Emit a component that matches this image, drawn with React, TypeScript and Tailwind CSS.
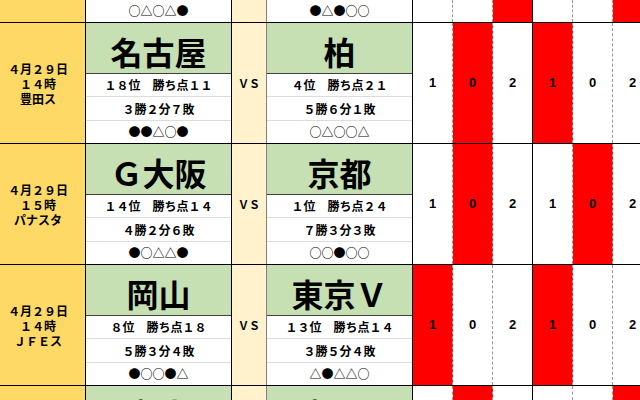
interface Side {
  name: string;
  rank: string;
  record: string;
  form: string;
}

interface Match {
  date: string[];
  home: Side;
  away: Side;
  reds: boolean[];
}

// Row cut off at the top edge: only its last line is on screen
const topTail = {
  homeForm: '○△○△●',
  awayForm: '●△●○○',
  reds: [false, false, true, false, false, true],
};

const matches: Match[] = [
  {
    date: ['４月２９日', '１４時', '豊田ス'],
    home: { name: '名古屋', rank: '１８位　勝ち点１１', record: '３勝２分７敗', form: '●●△○●' },
    away: { name: '柏', rank: '４位　勝ち点２１', record: '５勝６分１敗', form: '○△○○△' },
    reds: [false, true, false, true, false, false],
  },
  {
    date: ['４月２９日', '１５時', 'パナスタ'],
    home: { name: 'Ｇ大阪', rank: '１４位　勝ち点１４', record: '４勝２分６敗', form: '●○△△●' },
    away: { name: '京都', rank: '１位　勝ち点２４', record: '７勝３分３敗', form: '○○●○○' },
    reds: [false, true, false, false, true, false],
  },
  {
    date: ['４月２９日', '１４時', 'ＪＦＥス'],
    home: { name: '岡山', rank: '８位　勝ち点１８', record: '５勝３分４敗', form: '●○○●△' },
    away: { name: '東京Ｖ', rank: '１３位　勝ち点１４', record: '３勝５分４敗', form: '△●△△○' },
    reds: [true, false, false, true, false, false],
  },
];

// Row cut off at the bottom edge: only the top of the team names shows
const bottomHead = {
  home: '湘南',
  away: '福岡',
  reds: [false, true, false, false, false, true],
};

const scores = ['1', '0', '2', '1', '0', '2'];

function scoreCellClass(red: boolean, i: number) {
  return `w-[40px] shrink-0 flex items-center justify-center ${red ? 'bg-[#FF0000]' : 'bg-white'} ${
    i === 2 ? 'border-r border-black' : 'border-r border-dashed border-[#9a9a9a]'
  }`;
}

function TeamColumn({ side }: { side: Side }) {
  return (
    <div className="w-[146px] shrink-0 flex flex-col border-r border-black">
      {/* Team name */}
      <div className="h-[51px] bg-[#C6E0B4] border-b border-[#404040] flex items-center justify-center pt-[5px] text-[32px] leading-none font-bold">
        {side.name}
      </div>
      <div className="h-[23px] border-b border-[#dcdcdc] flex items-center justify-center">{side.rank}</div>
      <div className="h-[24px] border-b border-[#dcdcdc] flex items-center justify-center">{side.record}</div>
      <div className="h-[22px] flex items-center justify-center">{side.form}</div>
    </div>
  );
}

function MatchBlock({ match }: { match: Match }) {
  return (
    <div className="flex h-[121px] shrink-0 border-t border-black">
      <div className="w-[86px] shrink-0 bg-[#FFD966] border-r border-black pr-[9px] flex flex-col items-center justify-center">
        {match.date.map((line, i) => (
          <span key={i} className="leading-[15px]">
            {line}
          </span>
        ))}
      </div>

      <TeamColumn side={match.home} />

      <div className="w-[35px] shrink-0 bg-[#FFF2CC] border-r border-[#808080] flex items-center justify-center text-[11px]">
        ＶＳ
      </div>

      <TeamColumn side={match.away} />

      {/* Score columns */}
      {scores.map((score, i) => (
        <div key={i} className={scoreCellClass(match.reds[i], i)}>
          <span className="font-['Liberation_Sans',sans-serif] font-bold text-[13px]">{score}</span>
        </div>
      ))}
    </div>
  );
}

export default function App() {
  return (
    <div className="w-[640px] h-[400px] overflow-hidden bg-white text-black text-[12px] font-bold font-['Noto_Sans_CJK_JP',sans-serif]">
      <div className="flex flex-col w-[660px]">
        {/* partial row at the top */}
        <div className="flex h-[22px] shrink-0">
          <div className="w-[86px] shrink-0 bg-[#FFD966] border-r border-black" />
          <div className="w-[146px] shrink-0 border-r border-black flex items-center justify-center">
            {topTail.homeForm}
          </div>
          <div className="w-[35px] shrink-0 bg-[#FFF2CC] border-r border-[#808080]" />
          <div className="w-[146px] shrink-0 border-r border-black flex items-center justify-center">
            {topTail.awayForm}
          </div>
          {topTail.reds.map((red, i) => (
            <div key={i} className={scoreCellClass(red, i)} />
          ))}
        </div>

        {matches.map((m, i) => (
          <MatchBlock key={i} match={m} />
        ))}

        {/* partial row at the bottom */}
        <div className="flex h-[15px] shrink-0 border-t border-black overflow-hidden">
          <div className="w-[86px] shrink-0 bg-[#FFD966] border-r border-black" />
          <div className="w-[146px] shrink-0 bg-[#C6E0B4] border-r border-black flex justify-center pt-[11px] text-[32px] leading-none">
            {bottomHead.home}
          </div>
          <div className="w-[35px] shrink-0 bg-[#FFF2CC] border-r border-[#808080]" />
          <div className="w-[146px] shrink-0 bg-[#C6E0B4] border-r border-black flex justify-center pt-[11px] text-[32px] leading-none">
            {bottomHead.away}
          </div>
          {bottomHead.reds.map((red, i) => (
            <div key={i} className={scoreCellClass(red, i)} />
          ))}
        </div>
      </div>
    </div>
  );
}
